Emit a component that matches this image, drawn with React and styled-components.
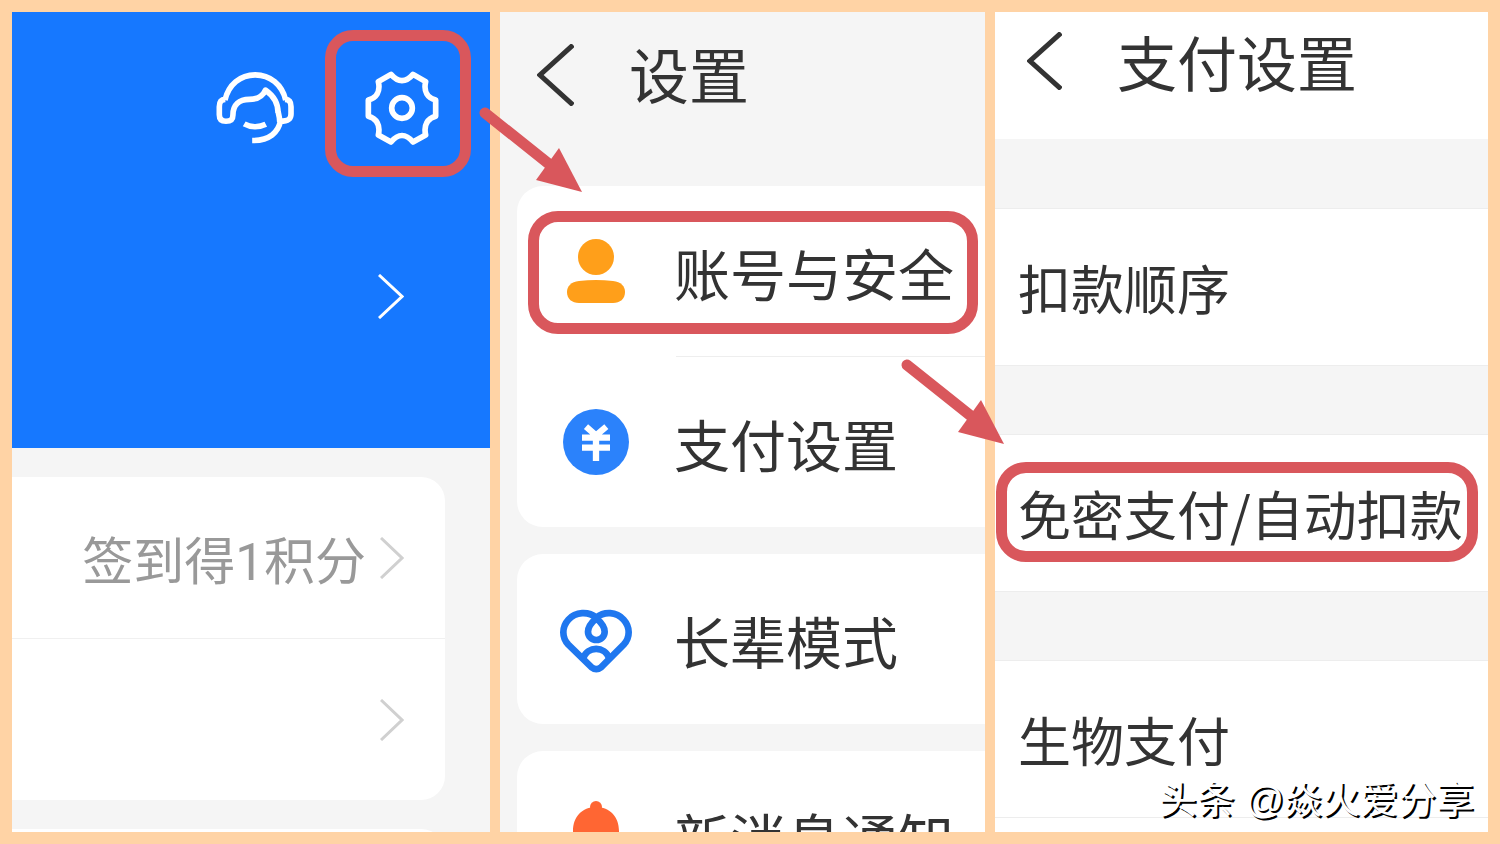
import React from "react";
import styled, { createGlobalStyle } from "styled-components";

const GlobalStyle = createGlobalStyle`
  *, *::before, *::after { box-sizing: border-box; }
  body {
    margin: 0;
    background: #ffd3a5;
    color: #333;
    font-family: "Noto Sans CJK SC", "Noto Sans", sans-serif;
  }
  h1, h2, p, ul { margin: 0; padding: 0; font-weight: 400; }
  ul { list-style: none; }
  a { color: inherit; text-decoration: none; }
  button { border: 0; padding: 0; background: none; color: inherit; font: inherit; cursor: pointer; }
  svg { display: block; flex: none; }
`;

const Page = styled.main`
  position: relative;
  display: grid;
  grid-template-columns: 478fr 485fr 493fr;
  grid-template-rows: minmax(0, 1fr);
  gap: 10px;
  height: 100vh;
  padding: 12px;
  overflow: hidden;
`;

const Step = styled.section`
  position: relative;
  min-width: 0;
`;

const Screen = styled.div`
  height: 100%;
  overflow: hidden;
  background: ${(p) => p.$bg || "#f5f5f5"};
`;

const Highlight = styled.span`
  position: absolute;
  inset: ${(p) => p.$inset};
  border: 11px solid #d9575c;
  border-radius: ${(p) => p.$radius}px;
  pointer-events: none;
`;

const ArrowMark = styled.svg`
  position: absolute;
  top: ${(p) => p.$top}px;
  left: ${(p) => p.$left}px;
  z-index: 2;
  pointer-events: none;
`;

const ProfileHeader = styled.header`
  height: 436px;
  padding-top: 59px;
  background: #1678ff;
  color: #fff;
`;

const Actions = styled.div`
  display: flex;
  justify-content: flex-end;
  gap: 71px;
  padding-right: 51px;
`;

const IconButton = styled.button`
  position: relative;
`;

const ProfileLink = styled.a`
  display: flex;
  align-items: center;
  justify-content: flex-end;
  height: 180px;
  margin-top: 61px;
  padding-right: 86px;
`;

const PointsCard = styled.ul`
  margin: 29px 45px 0 0;
  border-radius: 0 24px 24px 0;
  background: #fff;
`;

const PointsRow = styled.li`
  & + & { border-top: 1px solid #f0f0f0; }
`;

const PointsLink = styled.a`
  display: flex;
  align-items: center;
  justify-content: flex-end;
  gap: 14px;
  height: 161px;
  padding-right: 41px;
  color: #999;
  font-family: Roboto, "Noto Sans CJK SC", sans-serif;
  font-size: 51px;
  line-height: 60px;
  white-space: nowrap;
`;

const PointsLabel = styled.span`
  padding-top: 10px;
`;

const TitleBar = styled.header`
  display: flex;
  align-items: flex-start;
  gap: 55px;
  height: ${(p) => p.$height}px;
  padding: ${(p) => p.$top}px 0 0 ${(p) => p.$left}px;
`;

const Title = styled.h1`
  font-size: 60px;
  line-height: 58px;
  white-space: nowrap;
`;

const CardStack = styled.div`
  display: flex;
  flex-direction: column;
  gap: 27px;
  padding-left: 17px;
`;

const SettingsCard = styled.ul`
  border-radius: 26px 0 0 26px;
  background: #fff;
`;

const SettingsItem = styled.li`
  position: relative;
  & + &::before {
    content: "";
    display: block;
    height: 1px;
    margin-left: 159px;
    background: #eee;
  }
`;

const SettingsLink = styled.a`
  display: flex;
  align-items: center;
  gap: 42px;
  height: 170px;
  padding-left: 43px;
  font-size: 56px;
  line-height: 64px;
  white-space: nowrap;
`;

const SettingsLabel = styled.span`
  padding-top: 2px;
`;

const IconSlot = styled.span`
  display: flex;
  justify-content: center;
  width: 72px;
`;

const PaymentList = styled.ul`
  display: flex;
  flex-direction: column;
  gap: 70px;
  padding-top: 70px;
  background: #f5f5f5;
`;

const PaymentItem = styled.li`
  position: relative;
  height: 156px;
  background: #fff;
  box-shadow: 0 0 0 1px #ededed;
`;

const PaymentLink = styled.a`
  display: flex;
  align-items: center;
  height: 100%;
  padding-left: 23px;
  font-size: 53px;
  line-height: 60px;
  white-space: nowrap;
`;

const Watermark = styled.p`
  position: absolute;
  right: 26px;
  bottom: 20px;
  z-index: 3;
  color: #fff;
  font-family: "Liberation Sans", "Noto Sans CJK SC", sans-serif;
  font-size: 38px;
  line-height: 48px;
  white-space: nowrap;
  text-shadow: 2px 2px 0 #000;
`;

const Chevron = ({ width, height, stroke, color, back }) => (
  <svg width={width} height={height} viewBox={`0 0 ${width} ${height}`} fill="none" aria-hidden="true">
    <polyline
      points={
        back
          ? `${width - 1},1 3,${height / 2} ${width - 1},${height - 1}`
          : `1,1 ${width - 2},${height / 2} 1,${height - 1}`
      }
      stroke={color}
      strokeWidth={stroke}
    />
  </svg>
);

const Arrow = ({ top, left }) => (
  <ArrowMark $top={top} $left={left} width="106" height="88" viewBox="0 0 106 88" aria-hidden="true">
    <path d="M8 8 L82 67" stroke="#d9575c" strokeWidth="11" strokeLinecap="round" />
    <path d="M82 43 L105 87 L59 75 Z" fill="#d9575c" />
  </ArrowMark>
);

const HeadsetIcon = () => (
  <svg width="78" height="74" viewBox="78 183 235 222" fill="none" stroke="#fff" strokeWidth="17" strokeLinejoin="round" aria-hidden="true">
    <path d="M105 270C116 224 151 194 196 194C241 194 277 224 288 270" />
    <path d="M106 268C92 269 88 277 88 290V314C88 328 95 334 108 334C122 334 129 329 129 315C129 284 148 268 178 268C206 268 219 258 227 240C250 256 265 276 265 308" />
    <path d="M286 268C300 269 304 277 304 290V312C304 328 296 334 272 334C266 366 240 392 187 392M265 304C268 316 270 326 270 336" />
    <path d="M163 342C182 353 208 353 228 343" />
  </svg>
);

const GearIcon = () => (
  <svg width="74" height="74" viewBox="524 183 222 222" fill="none" stroke="#fff" strokeWidth="17" strokeLinejoin="round" aria-hidden="true">
    <path d="M602 193Q635 231 668 193L706 215C699 245 712 264 736 270V319C712 326 699 344 706 375L668 396Q635 357 602 396L564 375C571 344 558 326 534 319V270C558 264 571 245 564 215Z" />
    <circle cx="635" cy="294" r="31" />
  </svg>
);

const PersonIcon = () => (
  <svg width="58" height="64" viewBox="0 0 58 64" fill="#ff9f1a" aria-hidden="true">
    <circle cx="29" cy="18" r="18" />
    <path d="M12 42Q29 40 46 42C54 43 58 47 58 53C58 60 53 64 46 64H12C5 64 0 60 0 53C0 47 4 43 12 42Z" />
  </svg>
);

const YenIcon = () => (
  <svg width="66" height="66" viewBox="69 86 198 198" aria-hidden="true">
    <circle cx="168" cy="185" r="99" fill="#2b82fb" />
    <path d="M138 139L168 165L199 139M126 172H210M126 202H210M168 160V242" fill="none" stroke="#fff" strokeWidth="19" />
  </svg>
);

const HeartIcon = () => (
  <svg width="72" height="64" viewBox="63 54 216 192" overflow="visible" fill="none" stroke="#1f77ef" strokeWidth="20" strokeLinejoin="round" aria-hidden="true">
    <path d="M172 86C148 66 110 68 88 92C68 114 68 146 88 167L158 235Q172 246 186 235L254 167C274 146 274 114 254 92C232 68 196 66 172 86Z" />
    <path d="M172 88C155 103 147 116 147 128A25 25 0 0 0 197 128C197 116 189 103 172 88Z" />
    <path d="M132 208C146 170 197 170 211 208" />
  </svg>
);

const BellIcon = () => (
  <svg width="56" height="70" viewBox="0 0 56 70" fill="#ff6633" aria-hidden="true">
    <circle cx="28" cy="6" r="6" />
    <path d="M28 6C14 6 5 16 5 30V46L0 56H56L51 46V30C51 16 42 6 28 6Z" />
    <path d="M20 60H36C35 67 21 67 20 60Z" />
  </svg>
);

const SettingsEntry = ({ icon, label, children }) => (
  <SettingsItem>
    <SettingsLink href="#">
      <IconSlot>{icon}</IconSlot>
      <SettingsLabel>{label}</SettingsLabel>
    </SettingsLink>
    {children}
  </SettingsItem>
);

export default function App() {
  return (
    <>
      <GlobalStyle />
      <Page>
        <Step>
          <Screen>
            <ProfileHeader>
              <Actions>
                <IconButton type="button" aria-label="客服">
                  <HeadsetIcon />
                </IconButton>
                <IconButton type="button" aria-label="设置">
                  <GearIcon />
                  <Highlight $inset="-41px -32px -32px -40px" $radius={28} />
                </IconButton>
              </Actions>
              <ProfileLink href="#" aria-label="个人主页">
                <Chevron width={26} height={45} stroke={3} color="#fff" />
              </ProfileLink>
            </ProfileHeader>
            <PointsCard>
              <PointsRow>
                <PointsLink href="#">
                  <PointsLabel>签到得1积分</PointsLabel>
                  <Chevron width={24} height={42} stroke={3} color="#d0d0d0" />
                </PointsLink>
              </PointsRow>
              <PointsRow>
                <PointsLink href="#" aria-label="更多">
                  <Chevron width={24} height={42} stroke={3} color="#d0d0d0" />
                </PointsLink>
              </PointsRow>
            </PointsCard>
            <PointsCard>
              <PointsRow>
                <PointsLink href="#" aria-label="更多" />
              </PointsRow>
            </PointsCard>
          </Screen>
        </Step>

        <Step>
          <Screen>
            <TitleBar $height={174} $top={32} $left={37}>
              <button type="button" aria-label="返回">
                <Chevron back width={37} height={62} stroke={5} color="#333" />
              </button>
              <Title>设置</Title>
            </TitleBar>
            <CardStack>
              <SettingsCard>
                <SettingsEntry icon={<PersonIcon />} label="账号与安全">
                  <Highlight $inset="25px 7px 22px 11px" $radius={30} />
                </SettingsEntry>
                <SettingsEntry icon={<YenIcon />} label="支付设置" />
              </SettingsCard>
              <SettingsCard>
                <SettingsEntry icon={<HeartIcon />} label="长辈模式" />
              </SettingsCard>
              <SettingsCard>
                <SettingsEntry icon={<BellIcon />} label="新消息通知" />
              </SettingsCard>
            </CardStack>
          </Screen>
          <Arrow top={93} left={-23} />
        </Step>

        <Step>
          <Screen $bg="#fff">
            <TitleBar $height={127} $top={20} $left={32}>
              <button type="button" aria-label="返回">
                <Chevron back width={35} height={58} stroke={5} color="#333" />
              </button>
              <Title>支付设置</Title>
            </TitleBar>
            <PaymentList>
              <PaymentItem>
                <PaymentLink href="#">扣款顺序</PaymentLink>
              </PaymentItem>
              <PaymentItem>
                <PaymentLink href="#">免密支付/自动扣款</PaymentLink>
                <Highlight $inset="27px 10px 29px 1px" $radius={30} />
              </PaymentItem>
              <PaymentItem>
                <PaymentLink href="#">生物支付</PaymentLink>
              </PaymentItem>
            </PaymentList>
          </Screen>
          <Arrow top={345} left={-96} />
        </Step>

        <Watermark>头条 @焱火爱分享</Watermark>
      </Page>
    </>
  );
}
